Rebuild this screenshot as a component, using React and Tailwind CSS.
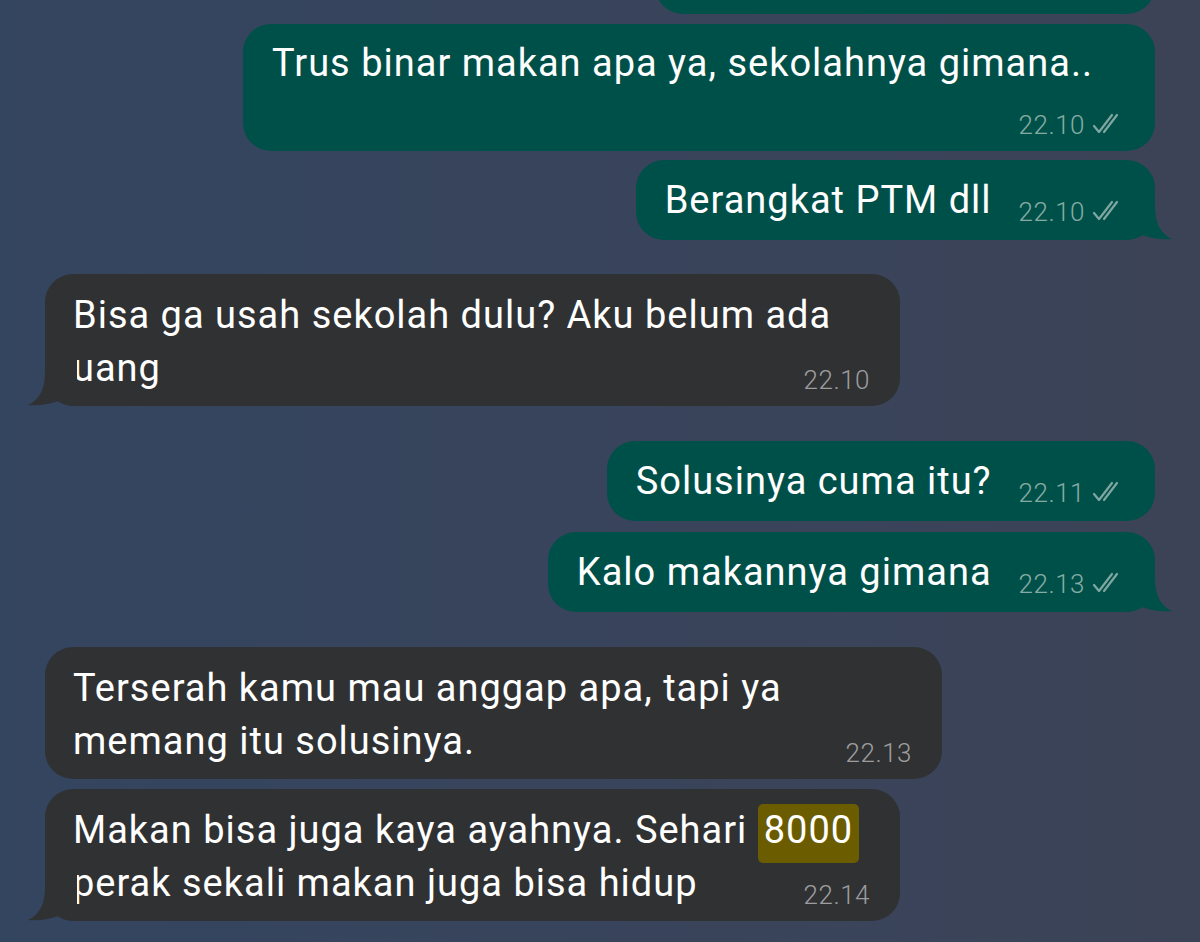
import React from 'react'

const FONT = { fontFamily: 'Roboto, "Noto Sans", Arial, sans-serif' }

function Ticks() {
  return (
    <svg width="36" height="22" viewBox="0 0 36 22" fill="none" className="ml-[6px] mb-[3px]">
      <path d="M3 13 L8 19 L21 2" stroke="#7fa79f" strokeWidth="2.2" strokeLinecap="round" strokeLinejoin="round" />
      <path d="M13 19 L26 2" stroke="#7fa79f" strokeWidth="2.2" strokeLinecap="round" />
    </svg>
  )
}

function Tail({ side, color }) {
  // little speech tail at the bottom corner
  const pos = side === 'left' ? 'left-[-18px]' : 'right-[-18px] -scale-x-100'
  return (
    <svg width="50" height="46" viewBox="0 0 50 46" className={'absolute bottom-0 ' + pos}>
      <path d="M18 0 V12 C18 30 12 40 1 45 C13 46 23 44 31 41 C36 44 42 46 50 46 V0 Z" fill={color} />
    </svg>
  )
}

function Time({ t, dark, read = true }) {
  return (
    <div className="flex items-end shrink-0">
      <span
        className={'text-[26px] leading-[26px] font-light tracking-[0.5px] ' + (dark ? 'text-[#9d9d9f]' : 'text-[#86aba3]')}
      >
        {t}
      </span>
      {!dark && read && <Ticks />}
    </div>
  )
}

function Out({ text, time, tail }) {
  return (
    <div className="relative self-end rounded-[28px] bg-[#00504a] pl-[29px] pr-[28px] pt-[13px] pb-[13px] flex items-end gap-[27px]">
      <span className="text-[38px] leading-[54px] tracking-[1px] text-white whitespace-nowrap">{text}</span>
      <div className="mb-[2px]">
        <Time t={time} />
      </div>
      {tail && <Tail side="right" color="#00504a" />}
    </div>
  )
}

function In({ lines, time, width, tail }) {
  const last = lines.length - 1
  return (
    <div className={'relative self-start rounded-[28px] bg-[#303133] pl-[28px] pr-[30px] pt-[15px] pb-[11px] ' + width}>
      {lines.map((l, i) =>
        i < last ? (
          <div key={i} className="text-[38px] leading-[53px] tracking-[1px] text-white whitespace-nowrap">{l}</div>
        ) : (
          <div key={i} className="flex items-end justify-between">
            <span className="text-[38px] leading-[53px] tracking-[1px] text-white whitespace-nowrap">{l}</span>
            <div className="mb-[2px]">
              <Time t={time} dark />
            </div>
          </div>
        )
      )}
      {tail && <Tail side="left" color="#303133" />}
    </div>
  )
}

export default function App() {
  return (
    <div
      className="w-[1200px] h-[942px] overflow-hidden bg-linear-to-r from-[#344560] to-[#3c4357]"
      style={FONT}
    >
      <div className="flex flex-col px-[45px]">
        {/* tail end of the previous message */}
        <div className="self-end w-[500px] h-[80px] mt-[-66px] rounded-[28px] bg-[#00504a]" />

        <div className="self-end mt-[10px] w-[912px] rounded-[28px] bg-[#00504a] pl-[29px] pr-[28px] pt-[13px] pb-[13px]">
          <div className="text-[38px] leading-[53px] tracking-[1px] text-white whitespace-nowrap">
            Trus binar makan apa ya, sekolahnya gimana..
          </div>
          <div className="flex justify-end mt-[22px]">
            <Time t="22.10" />
          </div>
        </div>

        <div className="flex flex-col mt-[9px]">
          <Out text="Berangkat PTM dll" time="22.10" tail />
        </div>

        <div className="flex flex-col mt-[34px]">
          <In
            width="w-[855px]"
            lines={['Bisa ga usah sekolah dulu? Aku belum ada', 'uang']}
            time="22.10"
            tail
          />
        </div>

        <div className="flex flex-col mt-[35px]">
          <Out text="Solusinya cuma itu?" time="22.11" />
        </div>
        <div className="flex flex-col mt-[11px]">
          <Out text="Kalo makannya gimana" time="22.13" tail />
        </div>

        <div className="flex flex-col mt-[35px]">
          <In
            width="w-[897px]"
            lines={['Terserah kamu mau anggap apa, tapi ya', 'memang itu solusinya.']}
            time="22.13"
          />
        </div>

        <div className="flex flex-col mt-[10px]">
          <In
            width="w-[855px]"
            lines={[
              <>
                Makan bisa juga kaya ayahnya. Sehari{' '}
                <span className="bg-[#6b5c00] rounded-[5px] px-[6px] pt-[4px] pb-[11px]">8000</span>
              </>,
              'perak sekali makan juga bisa hidup',
            ]}
            time="22.14"
            tail
          />
        </div>
      </div>
    </div>
  )
}
